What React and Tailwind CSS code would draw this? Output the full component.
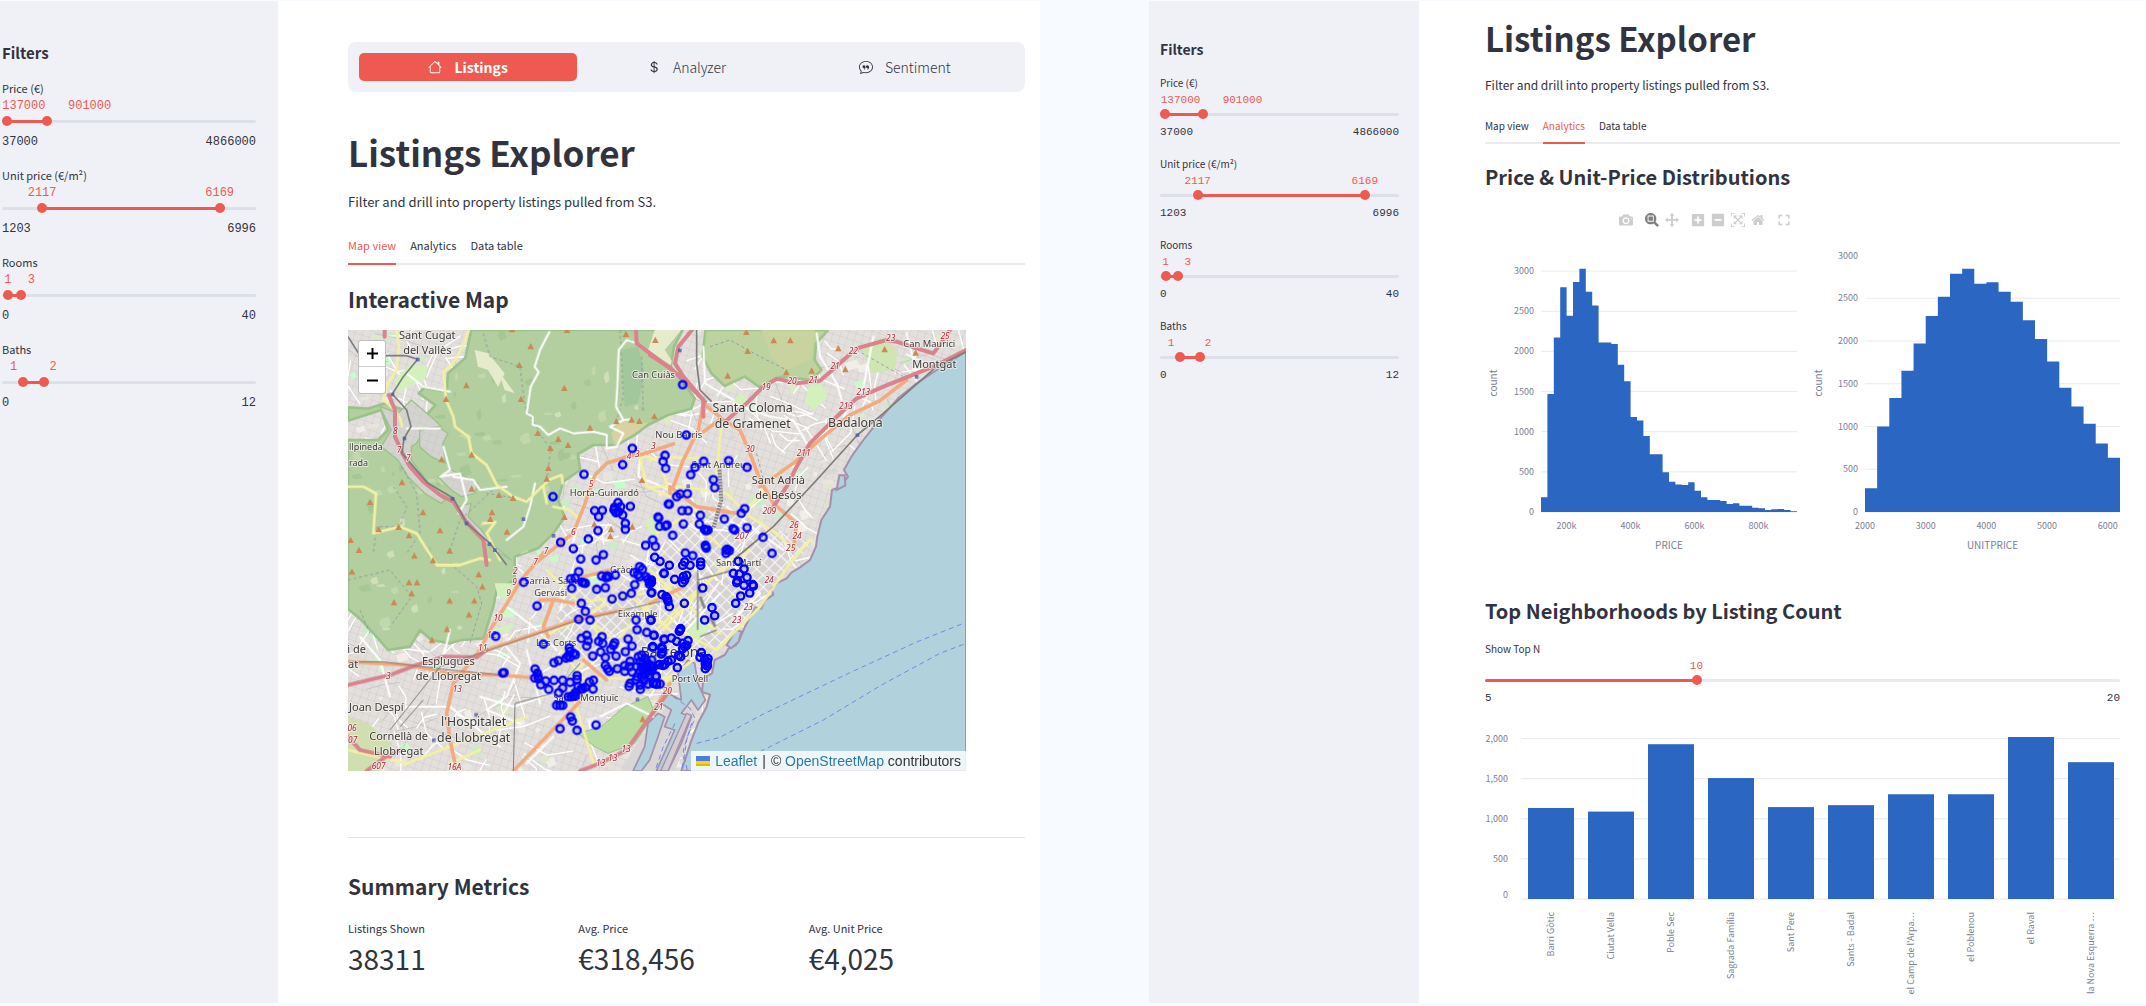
import React, { useState } from "react";
import { BsHouse, BsCurrencyDollar, BsChatQuote } from "react-icons/bs";

const MONO = "font-['Liberation_Mono',monospace]";

/* ---------- sliders ---------- */

const SIZES = {
  lg: {
    label: "text-[11px] leading-[18px]",
    values: "h-[18px] text-[12px] leading-[18px]",
    track: "h-3",
    ends: "mt-[6px] text-[12px] leading-[18px]",
  },
  sm: {
    label: "text-[10px] leading-4",
    values: "h-[17px] text-[11px] leading-[18px]",
    track: "h-3",
    ends: "mt-1 text-[11px] leading-4",
  },
};

const RANGE =
  "pointer-events-none absolute top-0 -left-[5px] h-full w-[calc(100%+10px)] appearance-none bg-transparent " +
  "[&::-webkit-slider-thumb]:pointer-events-auto [&::-webkit-slider-thumb]:size-[10px] " +
  "[&::-webkit-slider-thumb]:appearance-none [&::-webkit-slider-thumb]:rounded-full [&::-webkit-slider-thumb]:bg-[#ee5a52]";

function Slider({ id, label, min, max, initial, labelAt, size, rail }) {
  const [vals, setVals] = useState(initial);
  const s = SIZES[size];
  const pct = (v) => ((v - min) / (max - min)) * 100;
  const from = vals.length > 1 ? pct(vals[0]) : 0;
  const to = pct(vals[vals.length - 1]);
  return (
    <div role="group" aria-labelledby={id + "-label"}>
      <label id={id + "-label"} htmlFor={id + "-0"} className={"block " + s.label}>
        {label}
      </label>
      <div className={"relative text-[#ee5a52] " + MONO + " " + s.values}>
        {vals.map((v, i) => (
          <output
            key={i}
            htmlFor={id + "-" + i}
            className="absolute -translate-x-1/2"
            style={{ left: (v === initial[i] ? labelAt[i] : pct(v)) + "%" }}
          >
            {v}
          </output>
        ))}
      </div>
      <div className={"relative flex items-center " + s.track}>
        <div className={"h-[3px] w-full overflow-hidden rounded-full " + rail}>
          <div className="h-full bg-[#ee5a52]" style={{ marginLeft: from + "%", width: to - from + "%" }} />
        </div>
        {vals.map((v, i) => (
          <input
            key={i}
            id={id + "-" + i}
            type="range"
            min={min}
            max={max}
            value={v}
            aria-label={label}
            onChange={(e) => setVals(vals.map((o, j) => (j === i ? Number(e.target.value) : o)))}
            className={RANGE}
          />
        ))}
      </div>
      <div className={"flex justify-between " + MONO + " " + s.ends}>
        <span>{min}</span>
        <span>{max}</span>
      </div>
    </div>
  );
}

const FILTERS = [
  { key: "price", label: "Price (€)", min: 37000, max: 4866000, initial: [137000, 901000], labelAt: [8.6, 34.5] },
  { key: "unit", label: "Unit price (€/m²)", min: 1203, max: 6996, initial: [2117, 6169], labelAt: [15.8, 85.7] },
  { key: "rooms", label: "Rooms", min: 0, max: 40, initial: [1, 3], labelAt: [2.3, 11.6] },
  { key: "baths", label: "Baths", min: 0, max: 12, initial: [1, 2], labelAt: [4.6, 20.1] },
];

function Filters({ prefix, size }) {
  return (
    <>
      <h2 className={size === "lg" ? "text-[15px] leading-6 font-bold" : "text-[14px] leading-6 font-bold"}>Filters</h2>
      <div className={size === "lg" ? "mt-[14px] flex flex-col gap-[15px]" : "mt-[14px] flex flex-col gap-4"}>
        {FILTERS.map(({ key, ...f }) => (
          <Slider key={key} id={prefix + key} size={size} rail="bg-[#dce0e9]" {...f} />
        ))}
      </div>
    </>
  );
}

function Tabs({ active, size }) {
  const tab = size === "lg" ? "pb-[9px] text-[11px] leading-[18px]" : "pb-2 text-[10px] leading-4";
  return (
    <div role="tablist" className="flex gap-[14px] shadow-[inset_0_-2px_0_#ebebed]">
      {["Map view", "Analytics", "Data table"].map((t) => (
        <button
          key={t}
          role="tab"
          aria-selected={t === active}
          className={
            "border-b-2 whitespace-nowrap " + tab + (t === active ? " border-[#ee5a52] text-[#ee5a52]" : " border-transparent")
          }
        >
          {t}
        </button>
      ))}
    </div>
  );
}

/* ---------- map ---------- */

/* The map is drawn in four quadrants; each has its own origin. */
const NW = "translate(-24,-30)";
const NE = "translate(906,-30)";
const SW = "translate(-24,660)";
const SE = "translate(906,660)";

const MARKERS = [
  [NW, "877,385 848,434 732,463 639,530 834,548 842,560 871,559 764,572 787,571 776,590 822,570 828,578 824,562 836,575 848,585 856,610 856,628 774,632 745,657 662,667 700,686 917,676"],
  [NE, "98,194 109,345 45,406 39,424 47,445 161,424 135,442 122,464 236,422 291,442 190,479 194,503 80,530 90,522 112,521 55,552 58,553 96,572 114,572 151,586 148,612 100,612 24,591 26,594 29,619 51,615 46,618 68,646 163,628 168,632 174,630 8,660 16,679 223,597 274,580 284,566 249,626 254,630 291,623 339,652 366,700 166,676 169,684 167,680 228,690 238,692 228,700 232,688 106,699 128,707"],
  [SW, "722,27 768,30 790,14 716,65 692,86 705,84 695,115 551,97 591,168 726,97 736,100 732,99 785,78 798,83 806,80 802,78 826,75 770,118 796,113 816,147 848,138 874,130 884,104 882,68 899,50 907,58 893,74 899,80 918,80 924,88 930,95 928,102 935,128 972,70 724,160 736,184 716,208 750,210 888,210 932,210 891,239 920,247 941,256 972,268 467,259 610,282 724,265 740,256 744,272 740,288 758,318 776,274 786,260 788,280 782,306 824,278 820,286 812,298 796,322 828,318 864,267 876,288 856,305 870,334 688,294 690,304 700,310 706,314 684,318 690,322 678,324 642,338 655,332 492,368 488,369 585,357 592,370 584,384 596,386 594,380 602,404 617,393 642,391 626,418 668,391 690,397 711,377 711,388 668,414 656,428 748,396 760,391 759,417 714,410 722,418 728,416 736,412 706,428 700,436 694,440 685,440 706,438 650,466 668,466 660,466 692,501 697,513 660,536 711,541 768,525 796,346 802,356 808,364 832,356 854,347 854,364 868,350 876,366 867,409 870,400 901,418 900,405 924,402 948,380 960,402 948,402 895,320 905,315 915,325 900,335 910,340 920,335 930,345 890,350 905,352 918,350 935,330 940,350 900,365 910,362 925,365 935,360 892,380 905,380 915,372 928,375 888,390 912,392 938,292 965,292 968,306 970,345"],
  [SE, "14,22 30,34 58,46 42,70 152,46 152,36 98,46 120,46 104,36 265,34 282,57 250,70 268,72 262,92 260,98 291,82 282,106 308,104 310,108 299,129 272,138 257,160 74,88 100,80 104,90 98,98 110,76 158,114 4,90 4,98 4,128 36,134 48,140 52,146 54,154 58,170 103,160 186,173 194,197 164,210 3,210 90,240 92,236 88,244 12,256 43,268 64,264 80,274 114,272 98,280 104,290 110,286 98,296 8,290 36,296 34,312 86,316 92,320 54,334 64,330 82,353 38,346 44,344 28,344 4,350 10,350 18,378 10,400 20,402 154,308 150,322 164,328 174,326 172,336 166,342 172,348 166,356"],
];

const PEAKS = [
  [NW, "572,79 538,135 379,196 318,237 543,237 673,204 593,339 655,357 684,375 631,384 625,444 620,476 750,323 829,304 875,299 898,303 858,42 395,404 305,418 186,487 395,506 477,525 519,534 90,546 249,577 456,577 451,597 300,631 116,628 176,621 207,646 32,660 57,690 329,692 501,635 673,591 763,613 813,628 811,649 877,620 906,480 516,28 681,30"],
  [NE, "16,60 289,36 371,61 421,61 293,93 233,167 409,157 485,152 565,85 586,148 704,88 797,98 13,289"],
  [SW, "36,65 416,73 207,97 231,97 215,130 162,157 329,152 403,152 427,110 387,194 321,237 276,270 908,507 223,17 279,31"],
];

/* text, x, y, size, anchor */
const PLACES = [
  [NW, [["Sant Cugat", 262, 57, 33, "middle"], ["del Vallès", 262, 101, 33, "middle"], ["llpineda", 27, 390, 27, "start"], ["rada", 27, 437, 27, "start"], ["Can Cuiàs", 876, 175, 28, "start"], ["Horta-Guinardó", 793, 529, 28, "middle"]]],
  [NE, [["Santa Coloma", 308, 276, 37, "middle"], ["de Gramenet", 308, 323, 37, "middle"], ["Badalona", 616, 322, 37, "middle"], ["Can Maurici", 838, 81, 28, "middle"], ["Montgat", 853, 143, 33, "middle"], ["Nou Barris", 16, 355, 28, "start"], ["Sant Andreu", 125, 443, 28, "start"], ["Sant Adrià", 385, 493, 33, "middle"], ["de Besòs", 385, 537, 33, "middle"]]],
  [SW, [["Sarrià - Sant", 553, 101, 28, "start"], ["Gervasi", 632, 138, 28, "middle"], ["Gràcia", 810, 70, 28, "start"], ["Eixample", 893, 201, 28, "middle"], ["Les Corts", 588, 288, 28, "start"], ["i de", 78, 308, 33, "end"], ["at", 24, 354, 33, "start"], ["Esplugues", 325, 346, 33, "middle"], ["de Llobregat", 325, 391, 33, "middle"], ["Joan Despí", 27, 482, 33, "start"], ["l'Hospitalet", 401, 528, 37, "middle"], ["de Llobregat", 401, 575, 37, "middle"], ["Cornellà de", 176, 571, 33, "middle"], ["Llobregat", 176, 615, 33, "middle"], ["Sants-Montjuïc", 640, 453, 28, "start"]]],
  [SE, [["Sant Martí", 198, 49, 28, "start"], ["Barcelona", -28, 320, 42, "start"], ["Port Vell", 120, 397, 28, "middle"]]],
];

const ROAD_NUMBERS = [
  [NW, [["8", 166, 342], ["7", 177, 400], ["7", 205, 424], ["5", 753, 500], ["4", 867, 416], ["3", 892, 410], ["3", 940, 386], ["6", 700, 646], ["7", 618, 703]]],
  [NE, [["19", 348, 210], ["20", 426, 193], ["21", 490, 190], ["21", 555, 148], ["22", 610, 103], ["23", 722, 62], ["25", 885, 57], ["213", 640, 226], ["213", 588, 266], ["30", 300, 395], ["211", 461, 408], ["209", 358, 582], ["207", 276, 657], ["26", 432, 625], ["24", 441, 657], ["25", 422, 694]]],
  [SW, [["7", 587, 44], ["2", 526, 72], ["9", 524, 105], ["9", 506, 139], ["10", 474, 212], ["12", 455, 265], ["11", 428, 304], ["13", 352, 427], ["3", 145, 388], ["607", 116, 656], ["16A", 343, 661], ["06", 36, 544], ["07", 38, 578], ["13", 858, 605], ["13", 818, 632], ["13", 782, 647]]],
  [SE, [["24", 357, 100], ["23", 295, 179], ["23", 260, 218], ["20", 52, 432], ["21", 26, 480]]],
];

const points = (s) => s.split(" ").map((p) => p.split(",").map(Number));

function seeded(seed) {
  let a = seed;
  return () => {
    a = (a * 1664525 + 1013904223) % 4294967296;
    return a / 4294967296;
  };
}

function scatter() {
  const r = seeded(11);
  const blocks = [];
  const streets = [];
  const tints = ["#f1eee8", "#f1eee8", "#e9e6e0", "#cdebc6", "#c8facc", "#d9d6d6", "#e8e4de", "#dfe9c6"];
  for (let i = 0; i < 420; i++) {
    const x = r() * 1854;
    const y = r() * 1323;
    const w = 8 + r() * 30;
    const h = 6 + r() * 24;
    const k = r() * 12;
    blocks.push([`M${x},${y}l${w},${-k}l${k},${h}l${-w},${k}Z`, tints[Math.floor(r() * tints.length)]]);
  }
  for (let i = 0; i < 430; i++) {
    const x = r() * 1854;
    const y = r() * 1323;
    const a = r() * 6.28;
    const l = 24 + r() * 70;
    const b = a + (r() - 0.5) * 1.6;
    streets.push([`M${x},${y}l${Math.cos(a) * l},${Math.sin(a) * l}l${Math.cos(b) * l},${Math.sin(b) * l}`, r() > 0.25]);
  }
  const clearings = [];
  const q = seeded(5);
  for (let i = 0; i < 110; i++) {
    const x = q() * 1000;
    const y = q() * 900;
    const w = 5 + q() * 22;
    const h = 6 + q() * 26;
    clearings.push([`M${x},${y}l${w},${-h / 3}l${w / 3},${h}l${-w},${h / 4}l${-w / 2},${-h / 2}Z`, ["#c9dcae", "#a3c490", "#c5dbb0", "#9fc38f", "#dde6c6"][Math.floor(q() * 5)]]);
  }
  return { blocks, streets, clearings };
}

const SCATTER = scatter();

const FOREST =
  "M370,0L1004,0L978,50L968,110L1000,150L1040,205L1030,236L960,255L900,285L860,315L806,345L736,345L690,372L696,420L646,455L630,510L650,560L616,610L570,655L500,680L500,750L446,780L436,830L406,925L340,930L306,940L250,930L216,900L186,950L120,960L90,925L40,870L0,836L0,330L90,330L120,300L100,240L0,272L0,232L60,236L110,220L230,262L262,225L212,190L230,172L296,186L300,130L352,84Z";
const HILLS_EAST =
  "M1072,0L1440,0L1404,40L1400,90L1420,120L1390,150L1300,140L1262,160L1236,172L1190,140L1130,168L1090,130L1064,80Z";
const CORRIDOR = [
  "M96,230L150,250L190,210L225,240L260,270L280,290L230,300L205,340L190,350L190,390L220,430L250,470L290,510L280,520L230,490L180,440L150,390L100,350L130,300Z",
  "M215,300L270,290L300,310L284,340L292,400L250,380L215,350Z",
  "M270,440L310,420L350,440L390,460L380,490L340,500L310,480Z",
  "M330,530L370,520L360,560L400,600L430,640L490,690L440,660L400,630L350,580Z",
];
const SEA =
  "M1854,65L1766,120L1706,160L1650,205L1600,262L1546,330L1510,380L1488,420L1500,440L1478,470L1452,480L1446,530L1420,570L1408,620L1404,650L1386,690L1356,712L1330,728L1316,745L1290,758L1270,776L1276,794L1250,812L1240,836L1222,832L1206,862L1190,892L1178,920L1164,945L1142,955L1130,975L1100,990L1092,1030L1066,1045L1062,1086L1086,1094L1076,1130L1050,1180L1030,1232L1000,1323L1854,1323Z";

const ROADS = {
  yellow: [
    [NW, "M170,30L176,80L170,150L140,195L130,240L165,270L180,295L186,320M385,30L372,70L340,130L310,155L318,240L340,290L345,320L385,350L395,400L440,435L470,495L520,530L560,545L605,500L630,478L665,465L668,490M24,500L70,500L108,520L100,640L180,620L230,640L290,735L360,735L420,715L450,720M620,550L610,500M430,610L466,606L440,640L480,720M640,560L690,570L720,600"],
    [NW, "M870,405L990,420M960,430L990,520M900,410L920,500L990,530"],
    [NE, "M0,420L60,412L160,415M215,310L200,450L190,520M0,500L100,500L230,520L300,590L380,640L430,690M130,610L260,720M20,640L150,560M290,570L340,510"],
    [SW, "M700,160L990,120M590,270L700,215L990,60M600,385L990,385M760,220L900,330L990,400M850,120L990,240M620,60L720,160L780,260M24,600L200,640L560,500M330,640L420,600M660,300L760,420M700,440L760,640M840,260L990,90M700,380L760,300"],
    [SE, "M0,260L120,140L260,20M0,170L110,60M40,240L190,80L300,0M0,60L150,200L210,250M100,250L200,300L330,170L420,40L480,-30M0,390L60,380L130,330"],
  ],
  white: [
    [NW, "M628,36L600,90L584,140L596,156L572,200L560,280L578,290L578,314L600,320L625,345L660,325L700,340L760,335L800,345L800,385L830,380L850,340L810,320L850,300L870,298M860,60L836,90L832,200L828,260L850,300M890,70L860,60M200,325L300,325M310,380L330,450L300,470L360,460L380,540L355,580M340,470L400,480L420,510L500,500M585,490L570,560L550,620L500,660M690,700L720,590L730,550M900,410L895,470L990,510M200,160L250,200L330,215"],
    [NE, "M500,40L510,110L560,190L575,240M670,50L640,200L580,290M160,80L165,190L250,240M250,250L360,290L430,300L470,370M230,560L330,640L400,690M770,40L800,160"],
    [SW, "M500,170L580,230L650,300M490,280L540,340L500,440L440,480L540,520M560,300L600,460M200,470L330,470L480,590M60,260L120,330L150,440M330,240L310,320L250,330M420,440L520,470L640,430M700,60L660,180M560,640L640,560M780,500L860,460L940,500"],
    [SE, "M100,250L210,130M230,20L330,130L260,200M150,20L200,90M60,200L120,260"],
  ],
  orange: [
    [NW, "M1000,372L900,405L870,407L800,430L765,465L735,550L700,640L660,670L585,730"],
    [NE, "M70,500L100,420L145,330L160,250L215,295L160,335M220,300L270,330L300,400L330,480L370,550L440,610L430,690M60,520L60,500L140,560L260,580M330,500L430,430L520,350L600,285L690,242L770,180"],
    [SW, "M610,10L540,95L495,170L450,240L420,300L340,400L320,490L330,570L350,663M24,335L200,345L330,370L480,375L600,385M440,300L720,205L850,180M690,90L810,60M600,150L650,150L700,160M640,150L610,230L625,260M730,330L800,390M520,663L720,455"],
    [SE, "M0,500L36,440L60,400M0,160L100,110"],
  ],
  pink: [
    [NW, "M146,225L165,270L165,350L185,395L210,440L250,485L300,525L340,545L375,600L430,660L440,735M888,30L890,70L930,100L990,145M134,30L134,50"],
    [NE, "M0,105L60,143L120,200L165,245M126,30L85,80L75,130L100,170L160,240L160,290M225,305L290,250L340,200L380,176L440,190L510,182L570,130L620,85L710,60L740,65L800,85L850,100L880,60L900,30M370,560L410,500L440,440L480,370L560,290L620,235L700,200L850,140L948,90"],
    [SW, "M24,405L150,375L230,345L310,320L410,322L440,300M24,560L60,600L150,620M80,663L130,625L180,600M720,663L780,640L860,600L930,500L990,420"],
  ],
};

const ROAD_STYLE = [
  ["white", "#ffffff", 6],
  ["yellow", "#f4f0a4", 8],
  ["orange", "#f2ab7f", 11],
  ["pink", "#d9838c", 12],
];

function CityMap() {
  return (
    <svg viewBox="0 0 1854 1323" preserveAspectRatio="xMidYMid slice" className="block h-full w-full" role="img" aria-label="Map of Barcelona with listing markers">
      <defs>
        <pattern id="blocks" width="22" height="22" patternUnits="userSpaceOnUse" patternTransform="rotate(18)">
          <path d="M0,0H22M0,0V22" stroke="#c7c4c2" strokeWidth="2" />
        </pattern>
        <pattern id="eixample" width="26" height="26" patternUnits="userSpaceOnUse" patternTransform="rotate(44)">
          <rect width="26" height="26" fill="#d6d3d0" />
          <path d="M0,0H26M0,0V26" stroke="#f6f6f6" strokeWidth="7" />
        </pattern>
        <clipPath id="woods">
          <path d={FOREST} />
        </clipPath>
      </defs>
      <rect width="1854" height="1323" fill="#e2dfdc" />
      <rect width="1854" height="1323" fill="url(#blocks)" />
      {SCATTER.blocks.map(([d, c], i) => (
        <path key={i} d={d} fill={c} />
      ))}
      <path d="M640,760L780,800L960,620L1100,520L1290,600L1390,640L1300,740L1170,900L1080,980L900,1060L740,1010L620,900Z" fill="url(#eixample)" />
      {SCATTER.streets.map(([d, light], i) => (
        <path key={i} d={d} fill="none" stroke={light ? "#ffffff" : "#bdbaba"} strokeWidth={light ? 4 : 2} strokeLinejoin="round" />
      ))}

      <g strokeLinejoin="round">
        <path d={FOREST} fill="#b3cfa0" stroke="#9bc28b" strokeWidth="8" />
        <path d={HILLS_EAST} fill="#bcd3a0" stroke="#9fc38c" strokeWidth="8" />
      </g>
      <g clipPath="url(#woods)">
        {SCATTER.clearings.map(([d, c], i) => (
          <path key={i} d={d} fill={c} opacity="0.7" />
        ))}
        <path d="M380,60L420,70L470,130L450,170L420,120L390,110ZM450,120L500,190L470,180ZM1000,0L950,60L990,120L900,60L920,0Z" fill="#e6ebcb" />
        <path d="M820,60L870,50L890,130L870,220L830,230Z" fill="#9cc39b" opacity="0.7" />
        <path d="M790,310L820,270L900,280L860,310L800,345Z" fill="#d8d2a0" />
      </g>
      <path d="M1240,0L1400,0L1390,90L1310,120L1270,80Z" fill="#cdd3a0" opacity="0.7" />
      <path d="M1540,50L1600,20L1650,60L1640,120L1570,130Z" fill="#cfe6b4" />
      {CORRIDOR.map((d) => (
        <g key={d}>
          <path d={d} fill="#d3d3cf" stroke="#9bc28b" strokeWidth="4" strokeLinejoin="round" />
          <path d={d} fill="url(#blocks)" />
        </g>
      ))}
      <g fill="#d4f0bd">
        <path d="M140,150L190,100L240,110L230,150L180,170L150,190ZM1150,215L1180,190L1210,220L1190,250ZM1380,170L1420,160L1440,200L1400,240L1370,220Z" />
        <path d="M890,570L930,560L950,600L910,620ZM440,760L490,760L480,810L450,800ZM420,900L500,880L480,910ZM1030,880L1060,860L1090,890L1050,930L1020,910Z" />
      </g>
      <path d="M690,1210L760,1190L830,1130L900,1100L920,1150L860,1240L780,1270L740,1250Z" fill="#b9dca3" stroke="#98c18a" strokeWidth="3" />
      <path d="M0,1160L60,1180L130,1240L100,1323L0,1323Z" fill="#cfdfb0" />
      <path d="M820,1323L860,1250L930,1160L980,1110L1040,1130L1030,1200L980,1323Z" fill="#d8d6d6" />

      <path d={SEA} fill="#b1d1dc" stroke="#a58fab" strokeWidth="6" strokeLinejoin="round" />
      <g fill="#b1d1dc" stroke="#a58fab" strokeWidth="5" strokeLinejoin="round">
        <path d="M900,1180L930,1150L950,1160L930,1220L905,1290L880,1323L855,1323L890,1250Z" />
        <path d="M990,1030L1020,990L1040,1000L1050,1060L1072,1110L1050,1140L1030,1110L1000,1150L1030,1160L1000,1240L960,1323L925,1323L980,1200L950,1190L970,1140L940,1120L960,1090L1000,1110Z" />
      </g>
      <path d="M1016,1150L1030,1156L960,1323L938,1323Z" fill="#d3cdd3" stroke="#a58fab" strokeWidth="4" />
      <path d="M1136,945L1164,900L1180,905L1172,935L1150,955ZM1466,480L1474,436L1490,436L1492,466Z" fill="#b1d1dc" stroke="#a58fab" strokeWidth="6" />

      <g fill="none" stroke="#8c8fa0" strokeWidth="3" strokeDasharray="9 8" opacity="0.8">
        <path transform={NW} d="M430,40L450,110L540,140L555,260L600,340L632,390L620,480L560,540L440,520M840,30L850,230L830,300M905,110L910,280M160,500L200,560L180,620L110,620L100,700M470,500L360,600L330,690M185,440L230,520L240,640L200,700" />
        <path transform={NE} d="M180,80L240,60L330,110L410,150M620,90L760,170M320,400L340,480" />
        <path transform={SW} d="M24,90L150,60L215,140L150,230M330,40L410,110L425,160L390,280M60,180L90,250" />
      </g>

      {ROAD_STYLE.map(([key, color, width]) => (
        <g key={key} fill="none" stroke={color} strokeWidth={width} strokeLinejoin="round" strokeLinecap="round">
          {ROADS[key].map(([t, d], i) => (
            <path key={i} transform={t} d={d} />
          ))}
        </g>
      ))}

      <g fill="none" stroke="#7d7d7d" strokeWidth="5" strokeLinejoin="round">
        <path transform={NW} d="M233,118L190,170L157,222L200,270L213,320L192,355L186,400L262,488L340,535L380,610L450,670L500,735M24,50L60,107L200,107L233,118" />
        <path transform={NE} d="M140,30L140,130L150,210L185,245M948,95L860,140L700,280L622,345L500,480L370,620L250,720" />
        <path transform={SW} d="M24,335L130,336L330,360L480,375M520,663L525,460L640,430L720,340M150,540L300,350L700,215L980,150M180,530L250,450" strokeWidth="3" />
        <path transform={SE} d="M143,60L143,240M143,90L250,60M150,260L200,240" strokeWidth="4" />
      </g>
      <path transform={NE} d="M208,440L214,540L190,625" fill="none" stroke="#8a8a8a" strokeWidth="12" strokeDasharray="6 3" />
      <path transform={SE} d="M143,95L150,130M150,140L164,175M180,200L196,230" fill="none" stroke="#8a8a8a" strokeWidth="9" />

      <g fill="none" stroke="#7487ea" strokeWidth="3" strokeDasharray="15 11">
        <path transform={SE} d="M140,580L210,562L340,492L600,368L800,276L940,220M330,605L520,510L700,402L870,310L948,280M70,440L120,475L135,505L112,560L95,663M75,520L40,590L15,663M125,520L100,600L112,663" />
      </g>

      <g fill="#4b55a8">
        {[[209, 88], [133, 193], [169, 325], [313, 506], [355, 580], [424, 642], [526, 567], [616, 617], [440, 660], [384, 1154], [257, 1230], [995, 61], [1705, 140], [1528, 315], [1020, 468], [868, 1108]].map(([x, y], i) => (
          <rect key={i} x={x - 5} y={y - 5} width="11" height="11" opacity="0.75" />
        ))}
      </g>

      {PEAKS.map(([t, s], i) => (
        <g key={i} transform={t} fill="#cb8a55">
          {points(s).map(([x, y], j) => (
            <path key={j} d={`M${x},${y - 10}l10,19h-20Z`} />
          ))}
        </g>
      ))}

      <g fontFamily="'Noto Sans', sans-serif" paintOrder="stroke" stroke="#f4f2ee" strokeOpacity="0.75" strokeWidth="6" strokeLinejoin="round">
        {ROAD_NUMBERS.map(([t, list], i) => (
          <g key={i} transform={t} fill="#a8283c" fontSize="25" fontStyle="italic" textAnchor="middle">
            {list.map(([s, x, y], j) => (
              <text key={j} x={x} y={y}>{s}</text>
            ))}
          </g>
        ))}
        {PLACES.map(([t, list], i) => (
          <g key={i} transform={t} fill="#3b3b3b">
            {list.map(([s, x, y, size, anchor], j) => (
              <text key={j} x={x} y={y} fontSize={size} textAnchor={anchor}>{s}</text>
            ))}
          </g>
        ))}
      </g>

      {MARKERS.map(([t, s], i) => (
        <g key={i} transform={t} fill="#0000ff" fillOpacity="0.15" stroke="#0000ff" strokeWidth="7">
          {points(s).map(([x, y], j) => (
            <circle key={j} cx={x} cy={y} r="11" />
          ))}
        </g>
      ))}
    </svg>
  );
}

function MapPanel() {
  return (
    <div className="relative aspect-[618/441] w-full max-w-[618px] overflow-hidden">
      <CityMap />
      <div className="absolute top-[10px] left-[10px] flex flex-col overflow-hidden rounded-[3px] border border-black/25 bg-white text-black">
        <button aria-label="Zoom in" className="flex size-[26px] items-center justify-center border-b border-[#ccc]">
          <svg viewBox="0 0 11 11" className="size-[11px]"><path d="M5.5 0V11M0 5.5H11" stroke="currentColor" strokeWidth="2" /></svg>
        </button>
        <button aria-label="Zoom out" className="flex size-[26px] items-center justify-center">
          <svg viewBox="0 0 11 11" className="size-[11px]"><path d="M0 5.5H11" stroke="currentColor" strokeWidth="2" /></svg>
        </button>
      </div>
      <div className="absolute right-0 bottom-0 flex h-5 items-center gap-[5px] bg-white/80 px-[5px] font-['Liberation_Sans',sans-serif] text-[14px] leading-5 whitespace-nowrap text-[#333]">
        <svg viewBox="0 0 14 10" className="h-[10px] w-[14px]">
          <path fill="#4c7be1" d="M0 0h14v5H0z" />
          <path fill="#ffd500" d="M0 5h14v3H0z" />
          <path fill="#e0bc00" d="M0 8h14v2H0z" />
        </svg>
        <a href="#leaflet" className="text-[#2a7aab]">Leaflet</a>
        <span>|</span>
        <span>© <a href="#osm" className="text-[#2a7aab]">OpenStreetMap</a> contributors</span>
      </div>
    </div>
  );
}

/* ---------- charts ---------- */

const FONT = "'Noto Sans CJK SC', 'Open Sans', sans-serif";
const BLUE = "#2c66c3";

const PRICE_BARS = [183, 1469, 2174, 2800, 2444, 2863, 3029, 2743, 2573, 2112, 2112, 2091, 1834, 1627, 1183, 1141, 946, 718, 718, 494, 378, 344, 336, 369, 266, 183, 149, 149, 137, 100, 108, 79, 79, 54, 46, 25, 33, 37, 25, 8];
const UNIT_BARS = [277, 1001, 1332, 1652, 1971, 2291, 2517, 2786, 2844, 2669, 2688, 2576, 2459, 2244, 2022, 1761, 1453, 1235, 1032, 802, 635];

function Histogram({ x0, width, perThousand, bars, yTicks, gridTo, xTicks, title, titleX }) {
  const base = 272;
  const step = width / bars.length;
  let d = `M${x0},${base}`;
  bars.forEach((v, i) => {
    const y = base - (v / 1000) * perThousand;
    d += `V${y}H${x0 + (i + 1) * step}`;
  });
  d += `V${base}Z`;
  return (
    <g>
      {yTicks.map((v) => {
        const y = base - (v / 1000) * perThousand;
        return (
          <g key={v}>
            {v <= gridTo && <path d={`M${x0},${y}H${x0 + width}`} stroke="#e9eaf1" />}
            <text x={x0 - 7} y={y + 3} textAnchor="end" fontSize="9">{v}</text>
          </g>
        );
      })}
      <path d={d} fill={BLUE} />
      {xTicks.map(([label, at]) => (
        <text key={label} x={x0 + at * width} y="289" textAnchor="middle" fontSize="9">{label}</text>
      ))}
      <text x={x0 + width / 2} y="309" textAnchor="middle" fontSize="10">{title}</text>
      <text transform={`translate(${titleX},143) rotate(-90)`} textAnchor="middle" fontSize="10">count</text>
    </g>
  );
}

function Distributions() {
  return (
    <svg viewBox="0 0 635 330" className="block w-full" fontFamily={FONT} fill="#7b8092" role="img" aria-label="Price and unit price histograms">
      <Histogram x0={56} width={256} perThousand={80.3} bars={PRICE_BARS} yTicks={[0, 500, 1000, 1500, 2000, 2500, 3000]} gridTo={3000}
        xTicks={[["200k", 0.1], ["400k", 0.35], ["600k", 0.6], ["800k", 0.85]]} title="PRICE" titleX={12} />
      <Histogram x0={380} width={255} perThousand={85.5} bars={UNIT_BARS} yTicks={[0, 500, 1000, 1500, 2000, 2500, 3000]} gridTo={2500}
        xTicks={[["2000", 0], ["3000", 0.238], ["4000", 0.476], ["5000", 0.714], ["6000", 0.952]]} title="UNITPRICE" titleX={337} />
    </svg>
  );
}

const NEIGHBORHOODS = [
  ["Barri Gòtic", 1135], ["Ciutat Vella", 1090], ["Poble Sec", 1930], ["Sagrada Família", 1508], ["Sant Pere", 1146],
  ["Sants - Badal", 1170], ["el Camp de l'Arpa…", 1306], ["el Poblenou", 1306], ["el Raval", 2020], ["la Nova Esquerra …", 1706],
];

function NeighborhoodChart() {
  const base = 179;
  const y = (v) => base - v * 0.0802;
  return (
    <svg viewBox="0 0 635 280" className="block w-full" fontFamily={FONT} fontSize="9" fill="#7b8092" role="img" aria-label="Listing count by neighborhood">
      {[0, 500, 1000, 1500, 2000].map((v) => (
        <g key={v}>
          <path d={`M36,${y(v)}H635`} stroke="#e6e8ee" />
          <text x="23" y={v ? y(v) + 3 : y(v) - 1} textAnchor="end">{v.toLocaleString("en-US")}</text>
        </g>
      ))}
      {NEIGHBORHOODS.map(([name, v], i) => (
        <g key={name}>
          <rect x={43 + i * 60} y={y(v)} width="46" height={base - y(v)} fill={BLUE} />
          <text transform={`translate(${69 + i * 60},192) rotate(-90)`} textAnchor="end">{name}</text>
        </g>
      ))}
    </svg>
  );
}

const MODEBAR = [
  [["Download plot as a png", 1000, "m500 450c-83 0-150-67-150-150 0-83 67-150 150-150 83 0 150 67 150 150 0 83-67 150-150 150z m400 150h-120c-16 0-34 13-39 29l-31 93c-6 15-23 28-40 28h-340c-16 0-34-13-39-28l-31-94c-6-15-23-28-40-28h-120c-55 0-100-45-100-100v-450c0-55 45-100 100-100h800c55 0 100 45 100 100v450c0 55-45 100-100 100z m-400-550c-138 0-250 112-250 250 0 138 112 250 250 250 138 0 250-112 250-250 0-138-112-250-250-250z m365 380c-19 0-35 16-35 35 0 19 16 35 35 35 19 0 35-16 35-35 0-19-16-35-35-35z"]],
  [
    ["Zoom", 1000, "m1000-25l-250 251c40 63 63 138 63 218 0 224-182 406-407 406-224 0-406-182-406-406s183-406 407-406c80 0 155 22 218 62l250-250 125 125z m-812 250l0 438 437 0 0-438-437 0z m62 375l313 0 0-312-313 0 0 312z"],
    ["Pan", 1000, "m1000 350l-187 188 0-125-250 0 0 250 125 0-188 187-187-187 125 0 0-250-250 0 0 125-188-188 186-187 0 125 252 0 0-250-125 0 187-188 188 188-125 0 0 250 250 0 0-126 187 188z"],
  ],
  [
    ["Zoom in", 875, "m1 787l0-875 875 0 0 875-875 0z m687-500l-187 0 0-187-125 0 0 187-188 0 0 125 188 0 0 187 125 0 0-187 187 0 0-125z"],
    ["Zoom out", 875, "m0 788l0-876 875 0 0 876-875 0z m688-500l-500 0 0 125 500 0 0-125z"],
    ["Autoscale", 1000, "m250 850l-187 0-63 0 0-62 0-188 63 0 0 188 187 0 0 62z m688 0l-188 0 0-62 188 0 0-188 62 0 0 188 0 62-62 0z m-875-938l0 188-63 0 0-188 0-62 63 0 187 0 0 62-187 0z m875 188l0-188-188 0 0-62 188 0 62 0 0 62 0 188-62 0z m-125 188l-1 0-93-94-156 156 156 156 92-93 2 0 0 250-250 0 0-2 93-92-156-156-156 156 94 92 0 2-250 0 0-250 0 0 93 93 157-156-157-156-93 94 0 0 0-250 250 0 0 0-94 93 156 157 156-157-93-93 0 0 250 0 0 250z"],
    ["Reset axes", 928, "m786 296v-267q0-15-11-26t-25-10h-214v214h-143v-214h-214q-15 0-25 10t-11 26v267q0 1 0 2t0 2l321 264 321-264q1-1 1-4z m124 39l-34-41q-5-5-12-6h-2q-7 0-12 3l-386 322-386-322q-7-4-13-4-7 2-12 7l-35 41q-4 5-3 13t6 12l401 334q18 15 42 15t43-15l136-114v109q0 8 5 13t13 5h107q8 0 13-5t5-13v-227l122-102q5-5 6-12t-4-13z"],
  ],
  [["Fullscreen", 1000, "m100 730h270v-110h-160v-160h-110z m800 0v-270h-110v160h-160v110z m-800-760v270h110v-160h160v-110z m800 0h-270v110h160v160h110z"]],
];

function ModeBar() {
  return (
    <div className="flex w-[306px] justify-end gap-3">
      {MODEBAR.map((group, i) => (
        <div key={i} className="flex gap-[6px]">
          {group.map(([name, w, d]) => (
            <button key={name} aria-label={name} className={"flex size-[14px] items-center justify-center " + (name === "Zoom" ? "text-[#7f7f7f]" : "text-[#cdcdcd]")}>
              <svg viewBox={`0 0 ${w} 1000`} className="h-[14px] w-[14px]" fill="currentColor">
                <path transform="matrix(1 0 0 -1 0 850)" d={d} />
              </svg>
            </button>
          ))}
        </div>
      ))}
    </div>
  );
}

/* ---------- pages ---------- */

const NAV = [
  ["Listings", BsHouse, true],
  ["Analyzer", BsCurrencyDollar, false],
  ["Sentiment", BsChatQuote, false],
];

const METRICS = [["Listings Shown", "38311"], ["Avg. Price", "€318,456"], ["Avg. Unit Price", "€4,025"]];

function ListingsPage() {
  return (
    <section className="flex bg-white">
      <aside className="w-[278px] shrink-0 bg-[#f0f1f6] pt-10 pr-[22px] pl-[2px]">
        <Filters prefix="a-" size="lg" />
      </aside>
      <main className="min-w-0 flex-1 pt-[41px] pr-[15px] pl-[70px]">
        <nav className="grid grid-cols-3 rounded-lg bg-[#f0f1f6] p-[11px]">
          {NAV.map(([name, Icon, active]) => (
            <button
              key={name}
              aria-current={active ? "page" : undefined}
              className={
                "flex h-7 items-center justify-center gap-3 rounded-[5px] text-[14px] leading-7 " +
                (active ? "bg-[#ee5a52] font-bold text-white" : "font-light")
              }
            >
              <Icon className="size-[14px]" />
              {name}
            </button>
          ))}
        </nav>
        <h1 className="mt-10 text-[35px] leading-10 font-bold">Listings Explorer</h1>
        <p className="mt-5 text-[13px] leading-5">Filter and drill into property listings pulled from S3.</p>
        <div className="mt-6">
          <Tabs active="Map view" size="lg" />
        </div>
        <h2 className="mt-5 mb-[17px] text-[21px] leading-7 font-bold">Interactive Map</h2>
        <MapPanel />
        <hr className="mt-[66px] border-t border-[#e2e3e6]" />
        <h2 className="mt-[34px] text-[21px] leading-7 font-bold">Summary Metrics</h2>
        <dl className="mt-[19px] grid grid-cols-3 gap-[14px]">
          {METRICS.map(([k, v]) => (
            <div key={k}>
              <dt className="text-[11px] leading-[18px]">{k}</dt>
              <dd className="mt-[3px] text-[28px] leading-9">{v}</dd>
            </div>
          ))}
        </dl>
      </main>
    </section>
  );
}

function AnalyticsPage() {
  return (
    <section className="flex bg-white">
      <aside className="w-[270px] shrink-0 bg-[#f0f1f6] pt-9 pr-5 pl-[11px]">
        <Filters prefix="b-" size="sm" />
      </aside>
      <main className="min-w-0 flex-1 pt-[17px] pr-[26px] pl-[66px]">
        <h1 className="text-[33px] leading-10 font-bold">Listings Explorer</h1>
        <p className="mt-[17px] text-[12px] leading-5">Filter and drill into property listings pulled from S3.</p>
        <div className="mt-[23px]">
          <Tabs active="Analytics" size="sm" />
        </div>
        <h2 className="mt-[19px] mb-[22px] text-[20px] leading-7 font-bold">Price &amp; Unit-Price Distributions</h2>
        <ModeBar />
        <div className="mt-[13px]">
          <Distributions />
        </div>
        <h2 className="mt-[27px] mb-4 text-[20px] leading-7 font-bold">Top Neighborhoods by Listing Count</h2>
        <Slider id="topn" label="Show Top N" min={5} max={20} initial={[10]} labelAt={[33.3]} size="sm" rail="bg-[#e8eaf0]" />
        <div className="mt-[14px]">
          <NeighborhoodChart />
        </div>
      </main>
    </section>
  );
}

export default function App() {
  return (
    <div className="grid min-h-screen grid-cols-[1040fr_997fr] gap-x-[109px] bg-[#f7fbff] pt-px pb-[3px] font-['Noto_Sans_CJK_SC','Open_Sans',sans-serif] text-[#31333f]">
      <ListingsPage />
      <AnalyticsPage />
    </div>
  );
}
